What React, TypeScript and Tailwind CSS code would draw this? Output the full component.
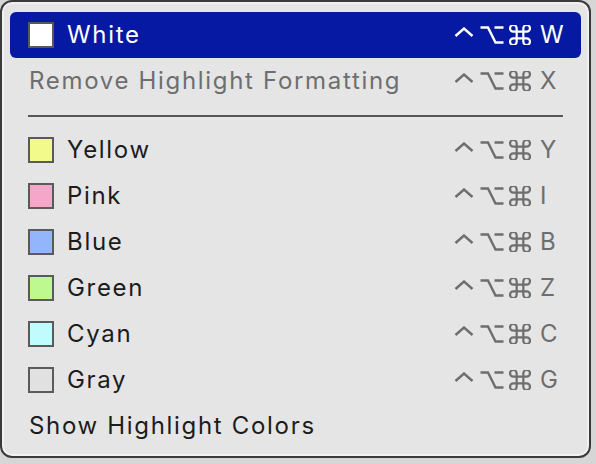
import React from "react";

interface MenuItem {
  label: string;
  swatch: string;
  key: string;
}

const colors: MenuItem[] = [
  { label: "Yellow", swatch: "bg-[#f3fa8c]", key: "Y" },
  { label: "Pink", swatch: "bg-[#f4a7c9]", key: "I" },
  { label: "Blue", swatch: "bg-[#93b5fa]", key: "B" },
  { label: "Green", swatch: "bg-[#bdf98f]", key: "Z" },
  { label: "Cyan", swatch: "bg-[#c0fbfd]", key: "C" },
  { label: "Gray", swatch: "bg-[#e1e1e1]", key: "G" },
];

function Shortcut({ letter, tone }: { letter: string; tone: string }) {
  return (
    <div className={`flex items-center tracking-normal ${tone}`}>
      <svg width="20" height="10" viewBox="0 0 20 10" className="mb-[7px]">
        <path d="M1.5 9 L10 1.5 L18.5 9" fill="none" stroke="currentColor" strokeWidth="2.4" />
      </svg>
      <svg width="24" height="18" viewBox="0 0 24 18" className="ml-[6px]">
        <path
          d="M0.5 1.5 H8 L15.5 16.5 H23.5 M14.5 1.5 H23.5"
          fill="none"
          stroke="currentColor"
          strokeWidth="2.4"
        />
      </svg>
      <svg width="22" height="20" viewBox="3 3 18 18" className="ml-[5px]">
        <path
          d="M15 6v12a3 3 0 1 0 3-3H6a3 3 0 1 0 3 3V6a3 3 0 1 0-3 3h12a3 3 0 1 0-3-3"
          fill="none"
          stroke="currentColor"
          strokeWidth="2"
        />
      </svg>
      <span className="ml-[9px] w-[26px] text-left">{letter}</span>
    </div>
  );
}

export default function App() {
  return (
    <div className="w-[596px] h-[464px] bg-[#d6d6d6] font-['Inter','Liberation_Sans',sans-serif] text-[24px] leading-none tracking-[0.07em]">
      <div className="w-[591px] h-[458px] rounded-[12px] bg-[#3a3a3a] p-[2px]">
        <div className="h-full rounded-[10px] bg-[#e5e5e5] border-2 border-[#f1f1f1] px-[6px] pt-[8px] pb-[5px] flex flex-col">
          <div className="h-[46px] rounded-[6px] bg-[#0519a2] text-white flex items-center pl-[18px] pr-[15px]">
            <span className="w-[26px] h-[26px] bg-white border-2 border-[#585858]" />
            <span className="ml-[13px] flex-1">White</span>
            <Shortcut letter="W" tone="text-white" />
          </div>
          <div className="h-[46px] flex items-center pl-[19px] pr-[15px] text-[#6e6e6e]">
            <span className="flex-1">Remove Highlight Formatting</span>
            <Shortcut letter="X" tone="text-[#6e6e6e]" />
          </div>
          <div className="h-[23px] flex items-center px-[18px]">
            <div className="h-[2px] w-full bg-[#575757]" />
          </div>
          {colors.map((c) => (
            <div key={c.label} className="h-[46px] flex items-center pl-[18px] pr-[15px] text-[#1c1c1c]">
              <span className={`w-[26px] h-[26px] border-2 border-[#5a5a5a] ${c.swatch}`} />
              <span className="ml-[13px] flex-1">{c.label}</span>
              <Shortcut letter={c.key} tone="text-[#6e6e6e]" />
            </div>
          ))}
          <div className="h-[46px] flex items-center pl-[19px] pr-[15px] text-[#1c1c1c]">
            <span>Show Highlight Colors</span>
          </div>
        </div>
      </div>
    </div>
  );
}
